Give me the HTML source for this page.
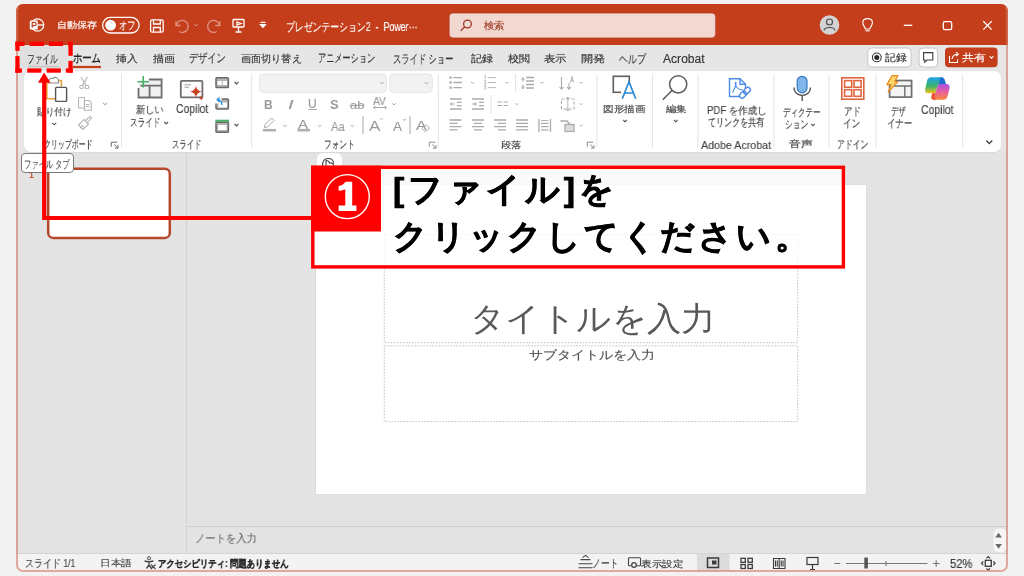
<!DOCTYPE html>
<html lang="ja">
<head>
<meta charset="utf-8">
<style>
html,body{margin:0;padding:0;}
body{width:1024px;height:576px;overflow:hidden;position:relative;background:#f2f2f2;font-family:"Liberation Sans",sans-serif;}
.a{position:absolute;}
svg.full{position:absolute;left:0;top:0;width:1024px;height:576px;}
</style>
</head>
<body>
<!-- window base -->
<div class="a" style="left:16px;top:4px;width:992px;height:568px;border-radius:7px;background:#e6e6e6;overflow:hidden;z-index:1;">
  <div class="a" style="left:0;top:0;width:992px;height:41px;background:#c43e1c;"></div>
  <div class="a" style="left:0;top:149px;width:992px;height:400px;background:#e3e3e3;"></div>
  <div class="a" style="left:0;top:549px;width:992px;height:19px;background:#f3f3f3;border-top:1px solid #d4d4d4;box-sizing:border-box;"></div>
</div>
<div class="a" style="left:16px;top:4px;width:988px;height:564px;border-radius:7px;border:2px solid rgba(210,125,100,0.62);border-top-color:rgba(196,62,28,0.15);z-index:30;"></div>
<!-- ribbon panel -->
<div class="a" style="left:24px;top:71px;width:977px;height:81px;border-radius:7px;background:#ffffff;box-shadow:0 0.5px 1px rgba(0,0,0,0.06);z-index:2;"></div>
<!-- slide -->
<div class="a" style="left:316px;top:185px;width:550px;height:309px;background:#ffffff;box-shadow:0 0 1px rgba(0,0,0,0.15);z-index:2;"></div>
<div class="a" style="left:317px;top:153px;width:25px;height:22px;background:#ffffff;border-radius:6px 6px 0 0;z-index:2;"></div>

<svg class="full" style="z-index:4" viewBox="0 0 1024 576">
<!-- ===== title bar ===== -->
<g fill="none" stroke="#fff" stroke-width="1.3">
  <circle cx="37.5" cy="25" r="6.2"/>
  <path d="M37.5 25 H43.7" />
  <path d="M31 20.5 H36.6 C37.4 20.5 37.8 21 37.8 21.8 V28.2 C37.8 29 37.4 29.5 36.6 29.5 H31 C30.2 29.5 29.8 29 29.8 28.2 V21.8 C29.8 21 30.2 20.5 31 20.5 Z" fill="#fff" stroke="none"/>
  <path d="M32.2 27.8 V22.3 H34.3 C35.6 22.3 36.2 23 36.2 24 C36.2 25 35.6 25.7 34.3 25.7 H32.2" stroke="#c43e1c" stroke-width="1.2"/>
  <rect x="102.6" y="17.4" width="36.5" height="15.6" rx="7.8"/>
  <circle cx="110.6" cy="25.2" r="5.4" fill="#fff" stroke="none"/>
  <rect x="150.6" y="19.8" width="12.6" height="12.4" rx="1.5"/>
  <path d="M153.5 20 V24 H160.3 V20 M153.5 32 V27.5 H160.3 V32"/>
  <g stroke="rgba(255,255,255,0.45)">
   <path d="M176 21 V25.5 H180.5 M176.3 25.3 A6 6 0 1 1 179 31.5"/>
   <path d="M194.2 24.2 L196 26 L197.8 24.2" stroke-width="1"/>
   <path d="M219.8 21 V25.5 H215.3 M219.5 25.3 A6 6 0 1 0 216.8 31.5"/>
  </g>
  <rect x="233" y="19.5" width="11" height="7.5" rx="0.8"/>
  <path d="M238.5 27 V32 M235.5 32 H241.5 M237 22 L241 23.5 L237 25 Z"/>
  <path d="M260.5 22.3 H265.5 M260.7 24.7 L263 27.3 L265.3 24.7 Z" fill="#fff"/>
  <path d="M865.3 29 C865.3 27 862.8 25.8 862.8 22.6 C862.8 20 864.8 18.6 867.6 18.6 C870.4 18.6 872.4 20 872.4 22.6 C872.4 25.8 869.9 27 869.9 29 Z" stroke-width="1.1"/>
  <path d="M865.5 30.8 H869.7" stroke-width="1.1"/>
  <path d="M903.8 25.3 H912.3"/>
  <rect x="943.3" y="21.6" width="8.4" height="8" rx="1.6"/>
  <path d="M983.3 21.2 L991.7 29.6 M991.7 21.2 L983.3 29.6"/>
</g>
<rect x="449.4" y="13.2" width="266" height="24.6" rx="4" fill="#f1d8d1" stroke="rgba(120,30,10,0.25)" stroke-width="0.8"/>
<g fill="none" stroke="#9e3b22" stroke-width="1.3"><circle cx="467.5" cy="24" r="3.9"/><path d="M464.7 26.8 L460.8 30.7"/></g>
<circle cx="829.5" cy="25" r="9.8" fill="#d3d3d3"/>
<g fill="none" stroke="#4a4a4a" stroke-width="1.2"><circle cx="829.5" cy="22" r="3"/><path d="M824 30.5 C824.5 26.5 834.5 26.5 835 30.5"/></g>

<!-- ===== tab row ===== -->
<rect x="20" y="45.5" width="48" height="22.5" fill="#e0e0e0"/>
<path d="M28 66.6 H58.6" stroke="#c4c4c4" stroke-width="1.4"/>
<path d="M73 67 H101" stroke="#c43e1c" stroke-width="2.2"/>
<rect x="867.8" y="48" width="43.4" height="19" rx="4" fill="#fff" stroke="#c6c6c6" stroke-width="1"/>
<circle cx="876.8" cy="57.4" r="4.4" fill="none" stroke="#3a3a3a" stroke-width="1.1"/><circle cx="876.8" cy="57.4" r="2.5" fill="#2a2a2a"/>
<rect x="919" y="48" width="18.6" height="19" rx="4" fill="#fff" stroke="#c6c6c6" stroke-width="1"/>
<path d="M923.6 52.6 H932.8 V60 H927 L924.8 62.2 V60 H923.6 Z" fill="none" stroke="#3a3a3a" stroke-width="1.1"/>
<rect x="945" y="47.5" width="52.6" height="19.8" rx="4" fill="#c43e1c"/>
<g fill="none" stroke="#fff" stroke-width="1.1"><path d="M949.5 56 V62.5 H957.5 V59.5"/><path d="M952 59 C952.5 55.5 954.5 54.2 958 54.2 M956 52.2 L958.3 54.2 L956 56.2"/><path d="M989.7 56.3 L991.5 58.1 L993.3 56.3"/></g>

<!-- ===== ribbon: clipboard ===== -->
<g fill="none" stroke-width="1.3">
  <path d="M53 80.5 H46.8 V98.8 H55" stroke="#e8a23a" stroke-width="1.6"/>
  <path d="M57 80.5 H61.4 V86.5" stroke="#e8a23a" stroke-width="1.6"/>
  <path d="M48.5 83 C48 79.5 50.5 77.6 53 78.5 C54.5 76.5 58.5 77.3 58.4 80.5 V83 Z" stroke="#8a8a8a" fill="#fff" stroke-width="1.1"/>
  <rect x="55.6" y="87.4" width="11" height="14" rx="0.8" stroke="#555" fill="#fff" stroke-width="1.4"/>
</g>
<g fill="none" stroke="#b4b4b4" stroke-width="1.1">
  <circle cx="81.5" cy="87" r="1.8"/><circle cx="87" cy="87" r="1.8"/>
  <path d="M82.5 85.4 L87.5 77 M86 85.4 L81 77"/>
  <rect x="78.5" y="97.5" width="6" height="10.5" rx="0.8"/>
  <path d="M84.5 100.5 H89 L91.3 103 V110.2 H84.5 Z" fill="#fff"/>
  <path d="M86 104.5 H89.5 M86 106.5 H89.5"/>
  <path d="M103 102.8 L105 104.8 L107 102.8"/>
  <path d="M78.5 125 L84 119.5 L88.5 124 L83 129.5 Z M85 121 L90 116.5 L91.5 118 L87 123"/>
  <path d="M80 126.5 L82 128.5 M81.5 124.8 L84 127.3"/>
  <path d="M111.3 146.8 V142.2 H117.2 M114.2 144.5 L117.8 148 M118 145.2 V148.2 H115" stroke="#6a6a6a" stroke-width="1"/>
</g>
<path d="M52.2 122.8 L54.2 124.8 L56.2 122.8" fill="none" stroke="#555" stroke-width="1.1"/>
<g stroke="#e3e3e3" stroke-width="1"><path d="M121.5 74.5 V147.5 M251.7 74.5 V147.5 M438.3 74.5 V147.5 M597 74.5 V147.5 M652.5 74.5 V147.5 M698 74.5 V147.5 M774 74.5 V147.5 M829 74.5 V147.5 M876 74.5 V147.5 M962.7 74.5 V147.5"/></g>

<!-- ===== ribbon: slides ===== -->
<rect x="138.5" y="80" width="23" height="17.5" fill="#f0f0f0"/>
<g fill="none" stroke="#6e6e6e" stroke-width="1.8">
  <path d="M149 79.5 H161.6 V97.5 H138.5 V88"/>
  <path d="M140.5 85.6 H161 M149.6 85.6 V97"/>
</g>
<path d="M143.2 76 V87.5 M137.5 81.7 H149" stroke="#4caf6a" stroke-width="1.6"/>
<rect x="180.8" y="80.8" width="21.6" height="16.6" rx="1" fill="#fbfbfb" stroke="#6e6e6e" stroke-width="1.8"/>
<path d="M184.5 84.8 H191 M184.5 87.2 H189" stroke="#a0a0a0" stroke-width="1"/>
<path d="M195.9 86 Q196.7 90.9 201.6 91.7 Q196.7 92.5 195.9 97.4 Q195.1 92.5 190.2 91.7 Q195.1 90.9 195.9 86 Z" fill="#c8401f"/>
<path d="M201.2 95.5 Q201.5 97.7 203.7 98 Q201.5 98.3 201.2 100.5 Q200.9 98.3 198.7 98 Q200.9 97.7 201.2 95.5 Z" fill="#c8401f"/>
<g fill="#b4b4b4" stroke="#6a6a6a" stroke-width="1.5">
  <rect x="216" y="77.8" width="12.4" height="9.8" rx="0.8"/>
  <rect x="216" y="98.9" width="12.4" height="10" rx="0.8"/>
  <rect x="216" y="122.2" width="12.4" height="10" rx="0.8"/>
</g>
<g fill="#ffffff"><rect x="217.6" y="81" width="4.2" height="4"/><rect x="222.8" y="81" width="4.2" height="4"/>
<rect x="218.5" y="102.5" width="8.5" height="5"/><rect x="218.2" y="125" width="8.4" height="5"/></g>
<rect x="214.6" y="97.5" width="7" height="6" fill="#fff"/>
<path d="M221.8 105 C222 101.5 220.5 99.8 217.5 99.8 M219.6 97.5 L217.2 99.8 L219.6 102.1" fill="none" stroke="#2f8fe0" stroke-width="1.4"/>
<path d="M215.3 120.8 H229" stroke="#4caf6a" stroke-width="2.2"/>
<g fill="none" stroke="#555" stroke-width="1.1">
  <path d="M234.6 82 L236.5 83.9 L238.4 82"/>
  <path d="M234.6 124 L236.5 125.9 L238.4 124"/>
  <path d="M164.3 122 L166.2 123.9 L168.1 122"/>
</g>

<!-- ===== ribbon: font ===== -->
<rect x="259.5" y="74" width="127" height="18.5" rx="4" fill="#f2f2f2" stroke="#e6e6e6" stroke-width="1"/>
<rect x="389.8" y="74" width="42.5" height="18.5" rx="4" fill="#f2f2f2" stroke="#e6e6e6" stroke-width="1"/>
<g fill="none" stroke="#a8a8a8" stroke-width="1">
  <path d="M380 82.2 L381.8 84 L383.6 82.2 M424.7 82.2 L426.5 84 L428.3 82.2"/>
  <path d="M392.3 103.3 L394 105 L395.7 103.3"/>
  <path d="M283.4 125 L285.1 126.7 L286.8 125 M318 125 L319.7 126.7 L321.4 125 M350.6 125 L352.3 126.7 L354 125"/>
  <path d="M308.5 109.5 H317"/>
  <path d="M349.5 105.3 H364.5"/>
  <path d="M373.5 107.5 H386.5 M375.5 105.8 L373.5 107.5 L375.5 109.2 M384.5 105.8 L386.5 107.5 L384.5 109.2"/>
  <path d="M363 116 V134 M410 116 V134"/>
  <path d="M380.3 119.5 L381.5 118 L382.7 119.5 M403.3 119 L404.5 120.5 L405.7 119"/>
  <path d="M422 128.5 L426 124.5 L429.5 128 L425.5 132 Z"/>
  <path d="M265 124.5 L271.5 118 L274 120.5 L267.5 127 L264.5 127.5 Z"/>
  <path d="M429.3 146.8 V142.2 H435.2 M432.2 144.5 L435.8 148 M436 145.2 V148.2 H433" stroke="#8a8a8a"/>
</g>
<path d="M262.8 130.2 H276" stroke="#b0b0b0" stroke-width="2.6"/>
<path d="M297.5 130.2 H310" stroke="#b0b0b0" stroke-width="2.6"/>

<!-- ===== ribbon: paragraph ===== -->
<g fill="none" stroke="#ababab" stroke-width="1.3">
  <path d="M453.3 77.6 H461.9 M453.3 82.5 H461.9 M453.3 87.6 H461.9"/>
  <path d="M487.8 77.6 H496 M487.8 82.5 H496 M487.8 87.6 H496 M484.3 76 L485.3 75.3 V79.3 M483.8 81 C484.5 80 486.3 80.3 486 81.7 L484 84 H486.5 M483.9 86 H486.2 L485 87.3 C486.5 87.3 486.5 89.6 483.9 89.3" stroke-width="0.8"/>
  <path d="M526 77.5 H534 M526 81 H534 M526 84.5 H534 M526 88 H534"/>
  <path d="M521.5 80 L523 77.5 L524.5 80 M523 78 V82 M523 84.5 V88.5 M521.5 86.5 L523 89 L524.5 86.5" stroke-width="1"/>
  <path d="M561.5 77 V89 M559.5 87 L561.5 89.2 L563.5 87 M569 83 V89 M567 87 L569 89.2 L571 87" stroke-width="1.1"/>
  <path d="M570.5 82.5 L572 76.5 L573.5 82.5 M571 80.8 H573" stroke-width="0.9"/>
  <path d="M450 99 H461.7 M457 102.3 H461.7 M457 105.7 H461.7 M450 109 H461.7"/>
  <path d="M472 99 H484 M479 102.3 H484 M479 105.7 H484 M472 109 H484"/>
  <path d="M450.5 104 H455 M452.3 102 L450.3 104 L452.3 106 M472 104 H476.5 M474.5 102 L476.5 104 L474.5 106" stroke-width="1"/>
  <path d="M497.5 102 H502 M497.5 105.5 H502 M503.5 102 H508 M503.5 105.5 H508" stroke-width="1"/>
  <rect x="561.5" y="99" width="12.5" height="10" stroke-width="1.1" stroke-dasharray="3 2"/>
  <path d="M567.8 97 V111 M566 99 L567.8 97 L569.6 99 M566 109 L567.8 111 L569.6 109" stroke-width="0.9"/>
  <path d="M449.5 120 H461.5 M449.5 123.3 H457.5 M449.5 126.6 H461.5 M449.5 129.9 H457.5"/>
  <path d="M472 120 H484 M474 123.3 H482 M472 126.6 H484 M474 129.9 H482"/>
  <path d="M494 120 H506 M498 123.3 H506 M494 126.6 H506 M498 129.9 H506"/>
  <path d="M516 120 H528 M516 123.3 H528 M516 126.6 H528 M516 129.9 H528"/>
  <path d="M539 119 V132 M550.5 119 V132 M541 123.3 H548.5 M541 126.6 H548.5 M541 129.9 H548.5"/>
  <path d="M541 120.5 H548.5" stroke-width="0.9"/>
  <path d="M560.5 121 H567 L570 124.5 V126" />
  <rect x="565" y="124.5" width="9" height="7" fill="#dcdcdc"/>
  <path d="M540.5 82 L542 83.5 L543.5 82 M471 82 L472.5 83.5 L474 82 M505.5 82 L507 83.5 L508.5 82 M579.5 82 L581 83.5 L582.5 82 M515.2 103.3 L516.7 104.8 L518.2 103.3 M579.5 103.3 L581 104.8 L582.5 103.3 M579.5 124.8 L581 126.3 L582.5 124.8" stroke-width="1"/>
  <path d="M515.6 74 V92 M491 95 V114" stroke="#e0e0e0" stroke-width="1"/>
  <path d="M587.3 146.8 V142.2 H593.2 M590.2 144.5 L593.8 148 M594 145.2 V148.2 H591" stroke="#8a8a8a" stroke-width="1"/>
</g>
<g fill="#b0b0b0"><rect x="449.4" y="76.4" width="2.4" height="2.4"/><rect x="449.4" y="81.3" width="2.4" height="2.4"/><rect x="449.4" y="86.4" width="2.4" height="2.4"/></g>

<!-- ===== ribbon: drawing/editing/pdf ===== -->
<rect x="613.3" y="76.3" width="16" height="16" fill="none" stroke="#5e5e5e" stroke-width="1.6"/>
<rect x="621" y="82" width="9" height="11" fill="#fff"/>
<path d="M622.3 98.8 L629 81.8 L635.7 98.8 M624.6 93 H633.4" fill="none" stroke="#2a8ad4" stroke-width="1.7"/>
<path d="M623.2 120 L625 121.8 L626.8 120" fill="none" stroke="#555" stroke-width="1.1"/>
<circle cx="678.2" cy="84.3" r="8.6" fill="none" stroke="#5e5e5e" stroke-width="1.5"/>
<path d="M672.2 90.3 L662.8 99.7" stroke="#5e5e5e" stroke-width="1.6"/>
<path d="M673.9 120 L675.7 121.8 L677.5 120" fill="none" stroke="#555" stroke-width="1.1"/>
<g fill="none" stroke="#4b8ae8" stroke-width="1.4">
  <path d="M740 96.5 H729.5 V78.8 H740 L745.5 84.3 V88.5"/>
  <path d="M740 78.8 V84.3 H745.5"/>
  <path d="M732.5 92.5 C734.5 89 736.5 85 736 82.5 C735 82 734.8 84.5 737 87.5 C738.5 89.5 740.5 90 742.5 89.5" stroke-width="1.1"/>
  <rect x="740.5" y="91" width="5" height="7.5" rx="2.5" transform="rotate(45 743 94.7)"/>
  <rect x="744.5" y="87" width="5" height="7.5" rx="2.5" transform="rotate(45 747 90.7)"/>
</g>
<!-- mic -->
<rect x="797.2" y="76.3" width="9.8" height="16.5" rx="4.9" fill="#80b6ea" stroke="#3a78c6" stroke-width="1.2"/>
<path d="M794 87.5 C794 98 810.5 98 810.5 87.5 M802.2 95.5 V101" fill="none" stroke="#5e5e5e" stroke-width="1.5"/>
<path d="M811.2 123.8 L813 125.6 L814.8 123.8" fill="none" stroke="#555" stroke-width="1.1"/>
<!-- addins -->
<g fill="#fff" stroke="#e0643f" stroke-width="1.6">
  <rect x="841.8" y="77.8" width="22" height="21.4"/>
  <rect x="844.6" y="80.6" width="7.1" height="6.6"/>
  <rect x="854" y="80.6" width="7.1" height="6.6"/>
  <rect x="844.6" y="89.7" width="7.1" height="6.6"/>
  <rect x="854" y="89.7" width="7.1" height="6.6"/>
</g>
<!-- designer -->
<rect x="889.6" y="80.5" width="22" height="16.6" fill="#f4f4f4" stroke="#6e6e6e" stroke-width="1.7"/>
<path d="M893 86 H911 M904.8 86 V96.5" fill="none" stroke="#6e6e6e" stroke-width="1.4"/>
<path d="M892.2 75.6 H898 L894.8 81.6 H897.8 L888.2 92.2 L891.2 84.6 H886.8 Z" fill="#fbd56e" stroke="#e8891f" stroke-width="1.1" stroke-linejoin="round"/>
<!-- copilot logo -->
<defs>
 <linearGradient id="cg1" x1="0" y1="0" x2="0" y2="1"><stop offset="0" stop-color="#1ea2ec"/><stop offset="0.55" stop-color="#3db36a"/><stop offset="1" stop-color="#f3c21a"/></linearGradient>
 <linearGradient id="cg2" x1="0" y1="0" x2="0" y2="1"><stop offset="0" stop-color="#a552e6"/><stop offset="0.5" stop-color="#ea5f9c"/><stop offset="1" stop-color="#f88a3a"/></linearGradient>
</defs>
<path d="M931 77.3 H941 C943.5 77.3 944.6 79 945.2 81.5 L945.8 84 H940.2 C938.7 84 938 85 937.5 86.5 L935.3 93.3 H928 C925.5 93.3 924.8 91.5 925.2 89 L927 81 C927.6 78.5 929 77.3 931 77.3 Z" fill="url(#cg1)"/>
<path d="M941 77.3 C943.5 77.3 944.6 79 945.2 81.5 L945.8 84 H940.2 C939.5 84 939 84.3 938.6 84.8 L940 79 C940.3 78 940.6 77.5 941 77.3 Z" fill="#1f5fd6" opacity="0.8"/>
<path d="M939.5 84 H946.5 C949 84 950 86 949.5 88.5 L947.8 95.5 C947.2 98.5 945.7 99.8 943.5 99.8 H934 C931.8 99.8 931 98.3 931.5 96 L932.3 93.3 H935.3 L937.5 86.5 C937.9 85 938.5 84 939.5 84 Z" fill="url(#cg2)"/>
<path d="M931.5 96 L932.3 93.3 H935.3 L934.8 95 C934.4 96.5 935 98.2 936.5 99.8 H934 C931.8 99.8 931 98.3 931.5 96 Z" fill="#e9492f" opacity="0.85"/>
<path d="M986.3 140.5 L989.3 143.5 L992.3 140.5" fill="none" stroke="#444" stroke-width="1.3"/>

<!-- ===== thumbnail pane & slide area ===== -->
<path d="M186.5 153 V553" stroke="#d2d2d2" stroke-width="1"/>
<path d="M187 526.5 H1007" stroke="#cdcdcd" stroke-width="1"/>
<rect x="48.2" y="168.7" width="121.6" height="69.2" rx="5" fill="#fff" stroke="#b5472a" stroke-width="2.5"/>
<path d="M322.5 166 C322.5 160.5 324.5 158.5 328 158.5 C332 158.5 333.5 160.5 333.5 163.5 M326 166 V160.5 C327.5 160.5 329 161 329.5 163 C331.5 162.5 333.5 163.5 334 166" fill="none" stroke="#444" stroke-width="1.1"/>
<rect x="384.3" y="234.3" width="413.4" height="108.4" fill="none" stroke="#b9b9b9" stroke-width="0.9" stroke-dasharray="1.5 1.5"/>
<rect x="384.3" y="345.8" width="413.4" height="75.8" fill="none" stroke="#b9b9b9" stroke-width="0.9" stroke-dasharray="1.5 1.5"/>
<rect x="993.6" y="528.5" width="12.6" height="24" rx="5" fill="#f6f6f6"/>
<path d="M995.3 537.5 L998.6 532.8 L1001.9 537.5 Z M995.3 544 L998.6 548.7 L1001.9 544 Z" fill="#666"/>

<!-- ===== status bar icons ===== -->
<g fill="none" stroke="#444" stroke-width="1">
  <circle cx="149" cy="558.3" r="1.6"/><path d="M144.5 561 L149 562 L153.5 561 M149 562 V565 L146.5 568.5 M149 565 L151.5 568.5" stroke-width="1.3"/><path d="M151 564.5 L155.5 569 M155.5 564.5 L151 569" stroke-width="1.1"/>
  <path d="M578.5 563.7 H592.5 M578.5 567.8 H592.5 M580.5 559.6 H590.5 M582.5 557.6 L585.5 555.4 L588.5 557.6" stroke-width="1.1"/>
  <rect x="628.5" y="557.8" width="12" height="8" rx="0.8" stroke-width="1.1"/>
</g>
<rect x="631.5" y="562.3" width="5" height="5" fill="#f3f3f3"/>
<circle cx="634" cy="565" r="2.3" fill="none" stroke="#444" stroke-width="1.3"/>
<rect x="697" y="553.5" width="32.5" height="17.5" fill="#dcdcdc"/>
<g fill="none" stroke="#3a3a3a" stroke-width="1.1">
  <rect x="707.5" y="558" width="11" height="9.5" stroke-width="1.5"/>
  <rect x="712" y="560.5" width="4.5" height="4" fill="#3a3a3a" stroke="none"/>
  <rect x="741" y="558.3" width="4.3" height="4" stroke-width="1.3"/><rect x="748" y="558.3" width="4.3" height="4" stroke-width="1.3"/>
  <rect x="741" y="564.5" width="4.3" height="4" stroke-width="1.3"/><rect x="748" y="564.5" width="4.3" height="4" stroke-width="1.3"/>
  <path d="M773.5 558.5 H785 V568.5 H773.5 Z M779.2 558.5 V568.5 M775.5 560.5 V566.5 M777.3 560.5 V566.5 M781.2 560.5 V566.5 M783 560.5 V566.5" stroke-width="1.1"/>
  <rect x="807" y="557.5" width="11" height="7" stroke-width="1.2"/>
  <path d="M812.5 564.5 V569.5 M810 569.5 H815" stroke-width="1.2"/>
  <path d="M834.3 563.5 H840.3" stroke="#777"/>
  <path d="M846 563.5 H927.5" stroke="#777" stroke-width="1.2"/>
  <path d="M886 561 V566" stroke="#777"/>
  <path d="M933 563.5 H939.5 M936.2 560.3 V566.7" stroke="#777"/>
  <rect x="985.3" y="560.3" width="6" height="6" stroke-width="1.3"/>
  <path d="M986.5 558.3 L988.3 556.5 L990.1 558.3 M986.5 568.3 L988.3 570.1 L990.1 568.3 M983.3 561.5 L981.5 563.3 L983.3 565.1 M993.3 561.5 L995.1 563.3 L993.3 565.1" stroke-width="1.2"/>
</g>
<rect x="864.3" y="557.5" width="3.6" height="11" rx="0.6" fill="#555"/>
</svg>

<!-- tooltip -->
<div class="a" style="left:20.8px;top:153.2px;width:50.8px;height:18.3px;background:#fff;border:1px solid #7a7a7a;border-radius:4px;z-index:6;"></div>

<div style="position:absolute;top:21.00px;line-height:1;white-space:pre;will-change:transform;z-index:5;font-size:9.35px;font-weight:normal;color:#ffffff;-webkit-text-stroke:0.15px #ffffff;left:56.88px;transform:scaleX(1.1176);transform-origin:0 0;">自動保存</div>
<div style="position:absolute;top:19.50px;line-height:1;white-space:pre;will-change:transform;z-index:5;font-size:11.0px;font-weight:normal;color:#ffffff;-webkit-text-stroke:0.15px #ffffff;left:119.25px;transform:scaleX(0.7500);transform-origin:0 0;">オフ</div>
<div style="position:absolute;top:20.50px;line-height:1;white-space:pre;will-change:transform;z-index:5;font-size:12.0px;font-weight:normal;color:#ffffff;-webkit-text-stroke:0.15px #ffffff;left:286.26px;transform:scaleX(0.7386);transform-origin:0 0;">プレゼンテーション2  -  Power···</div>
<div style="position:absolute;top:21.00px;line-height:1;white-space:pre;will-change:transform;z-index:5;font-size:10.2px;font-weight:normal;color:#9e3b22;-webkit-text-stroke:0.15px #9e3b22;left:484.00px;transform:scaleX(1.0250);transform-origin:0 0;">検索</div>
<div style="position:absolute;top:53.50px;line-height:1;white-space:pre;will-change:transform;z-index:5;font-size:11.5px;font-weight:normal;color:#333333;-webkit-text-stroke:0.15px #333333;left:27.36px;transform:scaleX(0.6383);transform-origin:0 0;">ファイル</div>
<div style="position:absolute;top:52.50px;line-height:1;white-space:pre;will-change:transform;z-index:5;font-size:11.5px;font-weight:bold;color:#242424;left:73.00px;transform:scaleX(0.7714);transform-origin:0 0;">ホーム</div>
<div style="position:absolute;top:54.00px;line-height:1;white-space:pre;will-change:transform;z-index:5;font-size:9.78px;font-weight:normal;color:#333333;-webkit-text-stroke:0.15px #333333;left:116.00px;transform:scaleX(1.0842);transform-origin:0 0;">挿入</div>
<div style="position:absolute;top:54.00px;line-height:1;white-space:pre;will-change:transform;z-index:5;font-size:9.78px;font-weight:normal;color:#333333;-webkit-text-stroke:0.15px #333333;left:152.70px;transform:scaleX(1.1105);transform-origin:0 0;">描画</div>
<div style="position:absolute;top:53.00px;line-height:1;white-space:pre;will-change:transform;z-index:5;font-size:11.5px;font-weight:normal;color:#333333;-webkit-text-stroke:0.15px #333333;left:188.64px;transform:scaleX(0.7630);transform-origin:0 0;">デザイン</div>
<div style="position:absolute;top:53.50px;line-height:1;white-space:pre;will-change:transform;z-index:5;font-size:10.35px;font-weight:normal;color:#333333;-webkit-text-stroke:0.15px #333333;left:240.99px;transform:scaleX(1.0121);transform-origin:0 0;">画面切り替え</div>
<div style="position:absolute;top:53.00px;line-height:1;white-space:pre;will-change:transform;z-index:5;font-size:11.5px;font-weight:normal;color:#333333;-webkit-text-stroke:0.15px #333333;left:318.32px;transform:scaleX(0.6805);transform-origin:0 0;">アニメーション</div>
<div style="position:absolute;top:53.50px;line-height:1;white-space:pre;will-change:transform;z-index:5;font-size:11.5px;font-weight:normal;color:#333333;-webkit-text-stroke:0.15px #333333;left:393.31px;transform:scaleX(0.6941);transform-origin:0 0;">スライド ショー</div>
<div style="position:absolute;top:54.00px;line-height:1;white-space:pre;will-change:transform;z-index:5;font-size:9.78px;font-weight:normal;color:#333333;-webkit-text-stroke:0.15px #333333;left:471.00px;transform:scaleX(1.1000);transform-origin:0 0;">記録</div>
<div style="position:absolute;top:54.00px;line-height:1;white-space:pre;will-change:transform;z-index:5;font-size:9.78px;font-weight:normal;color:#333333;-webkit-text-stroke:0.15px #333333;left:508.00px;transform:scaleX(1.1000);transform-origin:0 0;">校閲</div>
<div style="position:absolute;top:54.00px;line-height:1;white-space:pre;will-change:transform;z-index:5;font-size:9.78px;font-weight:normal;color:#333333;-webkit-text-stroke:0.15px #333333;left:543.86px;transform:scaleX(1.1368);transform-origin:0 0;">表示</div>
<div style="position:absolute;top:54.00px;line-height:1;white-space:pre;will-change:transform;z-index:5;font-size:9.78px;font-weight:normal;color:#333333;-webkit-text-stroke:0.15px #333333;left:580.78px;transform:scaleX(1.2222);transform-origin:0 0;">開発</div>
<div style="position:absolute;top:54.00px;line-height:1;white-space:pre;will-change:transform;z-index:5;font-size:11.5px;font-weight:normal;color:#333333;-webkit-text-stroke:0.15px #333333;left:618.75px;transform:scaleX(0.7500);transform-origin:0 0;">ヘルプ</div>
<div style="position:absolute;top:53.00px;line-height:1;white-space:pre;will-change:transform;z-index:5;font-size:12px;font-weight:normal;color:#333333;-webkit-text-stroke:0.15px #333333;left:663.40px;transform:scaleX(1.0073);transform-origin:0 0;">Acrobat</div>
<div style="position:absolute;top:52.90px;line-height:1;white-space:pre;will-change:transform;z-index:5;font-size:9.78px;font-weight:normal;color:#333333;-webkit-text-stroke:0.15px #333333;left:885.00px;transform:scaleX(1.0750);transform-origin:0 0;">記録</div>
<div style="position:absolute;top:52.90px;line-height:1;white-space:pre;will-change:transform;z-index:5;font-size:9.78px;font-weight:normal;color:#ffffff;-webkit-text-stroke:0.15px #ffffff;left:962.00px;transform:scaleX(1.1947);transform-origin:0 0;">共有</div>
<div style="position:absolute;top:106.50px;line-height:1;white-space:pre;will-change:transform;z-index:5;font-size:10.18px;font-weight:normal;color:#424242;-webkit-text-stroke:0.15px #424242;left:36.80px;transform:scaleX(0.8641);transform-origin:0 0;">貼り付け</div>
<div style="position:absolute;top:139.00px;line-height:1;white-space:pre;will-change:transform;z-index:5;font-size:10.5px;font-weight:normal;color:#424242;-webkit-text-stroke:0.15px #424242;left:44.07px;transform:scaleX(0.6307);transform-origin:0 0;">クリップボード</div>
<div style="position:absolute;top:105.40px;line-height:1;white-space:pre;will-change:transform;z-index:5;font-size:10.45px;font-weight:normal;color:#424242;-webkit-text-stroke:0.15px #424242;left:135.88px;transform:scaleX(0.9214);transform-origin:0 0;">新しい</div>
<div style="position:absolute;top:117.30px;line-height:1;white-space:pre;will-change:transform;z-index:5;font-size:11.0px;font-weight:normal;color:#424242;-webkit-text-stroke:0.15px #424242;left:130.31px;transform:scaleX(0.6905);transform-origin:0 0;">スライド</div>
<div style="position:absolute;top:103.40px;line-height:1;white-space:pre;will-change:transform;z-index:5;font-size:12px;font-weight:normal;color:#424242;-webkit-text-stroke:0.15px #424242;left:176.00px;transform:scaleX(0.8649);transform-origin:0 0;">Copilot</div>
<div style="position:absolute;top:138.50px;line-height:1;white-space:pre;will-change:transform;z-index:5;font-size:10.5px;font-weight:normal;color:#424242;-webkit-text-stroke:0.15px #424242;left:172.03px;transform:scaleX(0.6690);transform-origin:0 0;">スライド</div>
<div style="position:absolute;top:138.70px;line-height:1;white-space:pre;will-change:transform;z-index:5;font-size:10.5px;font-weight:normal;color:#424242;-webkit-text-stroke:0.15px #424242;left:324.30px;transform:scaleX(0.7000);transform-origin:0 0;">フォント</div>
<div style="position:absolute;top:140.80px;line-height:1;white-space:pre;will-change:transform;z-index:5;font-size:8.92px;font-weight:normal;color:#424242;-webkit-text-stroke:0.15px #424242;left:501.40px;transform:scaleX(1.1529);transform-origin:0 0;">段落</div>
<div style="position:absolute;top:105.00px;line-height:1;white-space:pre;will-change:transform;z-index:5;font-size:9.35px;font-weight:normal;color:#424242;-webkit-text-stroke:0.15px #424242;left:602.82px;transform:scaleX(1.1765);transform-origin:0 0;">図形描画</div>
<div style="position:absolute;top:105.00px;line-height:1;white-space:pre;will-change:transform;z-index:5;font-size:9.35px;font-weight:normal;color:#424242;-webkit-text-stroke:0.15px #424242;left:665.50px;transform:scaleX(1.1471);transform-origin:0 0;">編集</div>
<div style="position:absolute;top:105.80px;line-height:1;white-space:pre;will-change:transform;z-index:5;font-size:10.18px;font-weight:normal;color:#424242;-webkit-text-stroke:0.15px #424242;left:707.05px;transform:scaleX(0.9467);transform-origin:0 0;">PDF を作成し</div>
<div style="position:absolute;top:117.40px;line-height:1;white-space:pre;will-change:transform;z-index:5;font-size:10.53px;font-weight:normal;color:#424242;-webkit-text-stroke:0.15px #424242;left:708.27px;transform:scaleX(0.7307);transform-origin:0 0;">てリンクを共有</div>
<div style="position:absolute;top:140.00px;line-height:1;white-space:pre;will-change:transform;z-index:5;font-size:11.5px;font-weight:normal;color:#424242;-webkit-text-stroke:0.15px #424242;left:701.00px;transform:scaleX(0.9289);transform-origin:0 0;">Adobe Acrobat</div>
<div style="position:absolute;top:107.00px;line-height:1;white-space:pre;will-change:transform;z-index:5;font-size:11.0px;font-weight:normal;color:#424242;-webkit-text-stroke:0.15px #424242;left:783.02px;transform:scaleX(0.6811);transform-origin:0 0;">ディクテー</div>
<div style="position:absolute;top:118.60px;line-height:1;white-space:pre;will-change:transform;z-index:5;font-size:11.0px;font-weight:normal;color:#424242;-webkit-text-stroke:0.15px #424242;left:785.29px;transform:scaleX(0.7097);transform-origin:0 0;">ション</div>
<div style="position:absolute;top:140.00px;line-height:1;white-space:pre;will-change:transform;z-index:5;font-size:8.92px;font-weight:normal;color:#424242;-webkit-text-stroke:0.15px #424242;left:789.37px;transform:scaleX(1.3133);transform-origin:0 0;">音声</div>
<div style="position:absolute;top:105.80px;line-height:1;white-space:pre;will-change:transform;z-index:5;font-size:11.0px;font-weight:normal;color:#424242;-webkit-text-stroke:0.15px #424242;left:844.23px;transform:scaleX(0.7700);transform-origin:0 0;">アド</div>
<div style="position:absolute;top:117.70px;line-height:1;white-space:pre;will-change:transform;z-index:5;font-size:11.0px;font-weight:normal;color:#424242;-webkit-text-stroke:0.15px #424242;left:843.42px;transform:scaleX(0.7895);transform-origin:0 0;">イン</div>
<div style="position:absolute;top:139.10px;line-height:1;white-space:pre;will-change:transform;z-index:5;font-size:10.5px;font-weight:normal;color:#424242;-webkit-text-stroke:0.15px #424242;left:837.29px;transform:scaleX(0.7143);transform-origin:0 0;">アドイン</div>
<div style="position:absolute;top:105.80px;line-height:1;white-space:pre;will-change:transform;z-index:5;font-size:11.0px;font-weight:normal;color:#424242;-webkit-text-stroke:0.15px #424242;left:891.33px;transform:scaleX(0.6667);transform-origin:0 0;">デザ</div>
<div style="position:absolute;top:117.70px;line-height:1;white-space:pre;will-change:transform;z-index:5;font-size:11.0px;font-weight:normal;color:#424242;-webkit-text-stroke:0.15px #424242;left:887.07px;transform:scaleX(0.7667);transform-origin:0 0;">イナー</div>
<div style="position:absolute;top:103.90px;line-height:1;white-space:pre;will-change:transform;z-index:5;font-size:12px;font-weight:normal;color:#424242;-webkit-text-stroke:0.15px #424242;left:921.40px;transform:scaleX(0.8703);transform-origin:0 0;">Copilot</div>
<div style="position:absolute;top:98.50px;line-height:1;white-space:pre;will-change:transform;z-index:5;font-size:12px;font-weight:bold;color:#9a9a9a;left:264.00px;transform:scaleX(1.0000);transform-origin:0 0;">B</div>
<div style="position:absolute;top:98.50px;line-height:1;white-space:pre;will-change:transform;z-index:5;font-size:12px;font-weight:normal;color:#9a9a9a;font-style:italic;-webkit-text-stroke:0.15px #9a9a9a;left:288.00px;transform:scaleX(1.6667);transform-origin:0 0;">I</div>
<div style="position:absolute;top:97.50px;line-height:1;white-space:pre;will-change:transform;z-index:5;font-size:12px;font-weight:normal;color:#9a9a9a;-webkit-text-stroke:0.15px #9a9a9a;left:308.00px;transform:scaleX(1.0000);transform-origin:0 0;">U</div>
<div style="position:absolute;top:97.50px;line-height:1;white-space:pre;will-change:transform;z-index:5;font-size:13px;font-weight:bold;color:#9a9a9a;left:330.00px;transform:scaleX(1.0000);transform-origin:0 0;">S</div>
<div style="position:absolute;top:100.00px;line-height:1;white-space:pre;will-change:transform;z-index:5;font-size:11px;font-weight:normal;color:#9a9a9a;-webkit-text-stroke:0.15px #9a9a9a;left:350.00px;transform:scaleX(1.1667);transform-origin:0 0;">ab</div>
<div style="position:absolute;top:96.00px;line-height:1;white-space:pre;will-change:transform;z-index:5;font-size:11px;font-weight:normal;color:#9a9a9a;-webkit-text-stroke:0.15px #9a9a9a;left:373.00px;transform:scaleX(0.9286);transform-origin:0 0;">AV</div>
<div style="position:absolute;top:120.50px;line-height:1;white-space:pre;will-change:transform;z-index:5;font-size:12px;font-weight:normal;color:#9a9a9a;-webkit-text-stroke:0.15px #9a9a9a;left:331.00px;transform:scaleX(0.9333);transform-origin:0 0;">Aa</div>
<div style="position:absolute;top:118.50px;line-height:1;white-space:pre;will-change:transform;z-index:5;font-size:14px;font-weight:normal;color:#9a9a9a;left:369.00px;transform:scaleX(1.2222);transform-origin:0 0;">A</div>
<div style="position:absolute;top:121.00px;line-height:1;white-space:pre;will-change:transform;z-index:5;font-size:12px;font-weight:normal;color:#9a9a9a;-webkit-text-stroke:0.15px #9a9a9a;left:393.00px;transform:scaleX(1.1250);transform-origin:0 0;">A</div>
<div style="position:absolute;top:119.00px;line-height:1;white-space:pre;will-change:transform;z-index:5;font-size:13px;font-weight:normal;color:#9a9a9a;-webkit-text-stroke:0.15px #9a9a9a;left:416.00px;transform:scaleX(1.2222);transform-origin:0 0;">A</div>
<div style="position:absolute;top:118.50px;line-height:1;white-space:pre;will-change:transform;z-index:5;font-size:12px;font-weight:normal;color:#9a9a9a;-webkit-text-stroke:0.15px #9a9a9a;left:298.00px;transform:scaleX(1.2500);transform-origin:0 0;">A</div>
<div style="position:absolute;top:158.80px;line-height:1;white-space:pre;will-change:transform;z-index:7;font-size:10.5px;font-weight:normal;color:#555555;-webkit-text-stroke:0.15px #555555;left:24.34px;transform:scaleX(0.6618);transform-origin:0 0;">ファイル タブ</div>
<div style="position:absolute;top:171.00px;line-height:1;white-space:pre;will-change:transform;z-index:5;font-size:9px;font-weight:normal;color:#c43e1c;-webkit-text-stroke:0.15px #c43e1c;left:29.00px;transform:scaleX(1.0000);transform-origin:0 0;">1</div>
<div style="position:absolute;top:301.90px;line-height:1;white-space:pre;will-change:transform;z-index:3;font-size:33px;font-weight:300;color:#585858;left:469.83px;transform:scaleX(1.0414);transform-origin:0 0;">タイトルを入力</div>
<div style="position:absolute;top:349.00px;line-height:1;white-space:pre;will-change:transform;z-index:3;font-size:11.6px;font-weight:normal;color:#505050;-webkit-text-stroke:0.15px #505050;left:528.84px;transform:scaleX(1.1619);transform-origin:0 0;">サブタイトルを入力</div>
<div style="position:absolute;top:533.00px;line-height:1;white-space:pre;will-change:transform;z-index:5;font-size:10.92px;font-weight:normal;color:#6e6e6e;-webkit-text-stroke:0.15px #6e6e6e;left:194.53px;transform:scaleX(0.9365);transform-origin:0 0;">ノートを入力</div>
<div style="position:absolute;top:557.50px;line-height:1;white-space:pre;will-change:transform;z-index:5;font-size:10.5px;font-weight:normal;color:#4a4a4a;-webkit-text-stroke:0.15px #4a4a4a;left:25.18px;transform:scaleX(0.8167);transform-origin:0 0;">スライド 1/1</div>
<div style="position:absolute;top:559.00px;line-height:1;white-space:pre;will-change:transform;z-index:5;font-size:8.92px;font-weight:normal;color:#4a4a4a;-webkit-text-stroke:0.15px #4a4a4a;left:100.32px;transform:scaleX(1.1800);transform-origin:0 0;">日本語</div>
<div style="position:absolute;top:558.50px;line-height:1;white-space:pre;will-change:transform;z-index:5;font-size:10.29px;font-weight:bold;color:#262626;-webkit-text-stroke:0.2px #262626;left:158.00px;transform:scaleX(0.8365);transform-origin:0 0;">アクセシビリティ: 問題ありません</div>
<div style="position:absolute;top:558.00px;line-height:1;white-space:pre;will-change:transform;z-index:5;font-size:10.5px;font-weight:normal;color:#383838;-webkit-text-stroke:0.15px #383838;left:591.89px;transform:scaleX(0.8036);transform-origin:0 0;">ノート</div>
<div style="position:absolute;top:559.50px;line-height:1;white-space:pre;will-change:transform;z-index:5;font-size:8.92px;font-weight:normal;color:#383838;-webkit-text-stroke:0.15px #383838;left:640.82px;transform:scaleX(1.1765);transform-origin:0 0;">表示設定</div>
<div style="position:absolute;top:558.00px;line-height:1;white-space:pre;will-change:transform;z-index:5;font-size:12px;font-weight:normal;color:#383838;-webkit-text-stroke:0.15px #383838;left:949.57px;transform:scaleX(0.9348);transform-origin:0 0;">52%</div>
<div style="position:absolute;top:171.80px;line-height:1;white-space:pre;will-change:transform;z-index:20;font-size:34px;font-weight:bold;color:#000000;-webkit-text-stroke:0.7px #000;left:392.60px;letter-spacing:3.867px;">[ファイル]を</div>
<div style="position:absolute;top:219.20px;line-height:1;white-space:pre;will-change:transform;z-index:20;font-size:34px;font-weight:bold;color:#000000;-webkit-text-stroke:0.7px #000;left:393.20px;letter-spacing:3.160px;">クリックしてください。</div>

<!-- annotation -->
<svg class="full" style="z-index:15" viewBox="0 0 1024 576">
  <rect x="312.8" y="167.3" width="530.6" height="99.6" fill="rgba(255,255,255,0.8)" stroke="#ff0000" stroke-width="3.4"/>
  <rect x="311.2" y="165.7" width="69.8" height="65.8" fill="#ff0000"/>
  <circle cx="347.3" cy="196.6" r="22" fill="none" stroke="#fff" stroke-width="1.4"/>
  <path d="M345.6 181.8 H352.2 V205.5 H356.4 V211 H338.6 V205.5 H345.3 V189.3 C343.5 190.2 341 190.8 338.6 190.6 V186.2 C341.5 185.8 344 184 345.6 181.8 Z" fill="#fff"/>
</svg>
<svg class="full" style="z-index:35" viewBox="0 0 1024 576">
  <path d="M44.2 82 V218 H311.5" fill="none" stroke="#ff0000" stroke-width="4.2"/>
  <path d="M37.9 82.8 L44.2 72.4 L50.5 82.8 Z" fill="#ff0000"/>
  <g fill="#ff0000"><rect x="15.3" y="41.7" width="9.2" height="4.3"/><rect x="29.5" y="41.7" width="14.5" height="4.3"/><rect x="48.9" y="41.7" width="14.2" height="4.3"/><rect x="68.1" y="41.7" width="4.6" height="4.3"/><rect x="68.4" y="41.7" width="4.3" height="14.1"/><rect x="68.4" y="60.8" width="4.3" height="11.9"/><rect x="15.3" y="68.4" width="6.6" height="4.3"/><rect x="27.2" y="68.4" width="14.2" height="4.3"/><rect x="46.6" y="68.4" width="14.2" height="4.3"/><rect x="65.8" y="68.4" width="6.9" height="4.3"/><rect x="15.3" y="41.7" width="4.3" height="9.2"/><rect x="15.3" y="56.1" width="4.3" height="16.6"/></g>
</svg>
</body>
</html>
